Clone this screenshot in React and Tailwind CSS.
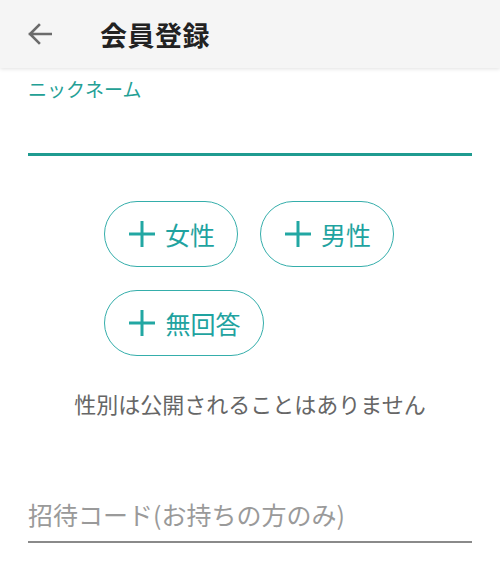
import React from "react";

const font = { fontFamily: '"Noto Sans CJK JP", "Noto Sans", sans-serif' };

function Plus() {
  return (
    <svg width="30" height="30" viewBox="0 0 30 30" className="shrink-0">
      <path d="M15 2v26M2 15h26" stroke="#22a7a3" strokeWidth="3" fill="none" />
    </svg>
  );
}

function Chip({ label, w }) {
  return (
    <button
      className={`h-[66px] ${w} flex items-center justify-center gap-[8px] rounded-full border-[1.5px] border-[#35aeab] bg-white text-[25px] leading-none text-[#1fa3a0]`}
    >
      <Plus />
      <span>{label}</span>
    </button>
  );
}

export default function App() {
  return (
    <div className="w-[500px] h-[562px] bg-white overflow-hidden" style={font}>
      <header className="h-[68px] bg-[#f5f5f5] flex items-center shadow-[0_1px_4px_rgba(0,0,0,0.12)] relative z-10">
        <div className="w-[100px] flex items-center pl-[27px]">
          <svg width="25" height="22" viewBox="0 0 25 22">
            <path d="M24 11H3M12 2L3 11l9 9" stroke="#6b6b6b" strokeWidth="2.6" fill="none" strokeLinecap="square" />
          </svg>
        </div>
        <h1 className="text-[27px] font-bold text-[#222] leading-none tracking-[0.5px]">会員登録</h1>
      </header>
      <div className="px-[28px]">
        <div className="pt-[10px] text-[19px] leading-[22px] text-[#23a095]">ニックネーム</div>
        <div className="h-[56px] border-b-[3px] border-[#1f9b90]" />
        <div className="w-[292px] mx-auto mt-[45px] flex flex-wrap gap-x-[22px] gap-y-[23px]">
          <Chip label="女性" w="w-[134px]" />
          <Chip label="男性" w="w-[134px]" />
          <Chip label="無回答" w="w-[160px]" />
        </div>
        <p className="mt-[33px] text-center text-[22px] leading-[28px] text-[#666]">性別は公開されることはありません</p>
        <div className="mt-[82px] pb-[12px] border-b-[2px] border-[#8a8a8a] text-[25px] leading-[30px] text-[#9a9a9a]">
          招待コード(お持ちの方のみ)
        </div>
      </div>
    </div>
  );
}
